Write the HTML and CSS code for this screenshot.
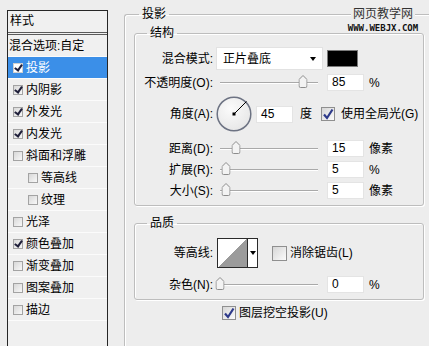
FILE: index.html
```html
<!DOCTYPE html>
<html lang="zh-CN">
  <head>
    <meta charset="UTF-8" />
    <meta name="viewport" content="width=device-width, initial-scale=1.0" />
    <title>图层样式 - 投影</title>
    <link rel="stylesheet" href="styles.css">
  </head>
  <body>
    <div class="dialog">
      <!-- Style list -->
      <aside class="styles-panel">
        <div class="panel-title">样式</div>
        <ul class="style-list">
          <li class="style-item plain">混合选项:自定</li>
          <li class="style-item selected"><span class="tick on"></span>投影</li>
          <li class="style-item"><span class="tick on"></span>内阴影</li>
          <li class="style-item"><span class="tick on"></span>外发光</li>
          <li class="style-item"><span class="tick on"></span>内发光</li>
          <li class="style-item"><span class="tick"></span>斜面和浮雕</li>
          <li class="style-item sub"><span class="tick"></span>等高线</li>
          <li class="style-item sub"><span class="tick"></span>纹理</li>
          <li class="style-item"><span class="tick"></span>光泽</li>
          <li class="style-item"><span class="tick on"></span>颜色叠加</li>
          <li class="style-item"><span class="tick"></span>渐变叠加</li>
          <li class="style-item"><span class="tick"></span>图案叠加</li>
          <li class="style-item"><span class="tick"></span>描边</li>
        </ul>
      </aside>

      <!-- Drop shadow settings -->
      <main class="settings">
        <fieldset class="group outer">
          <legend>投影</legend>

          <fieldset class="group inner">
            <legend>结构</legend>

            <div class="row mode-row">
              <span class="field-label">混合模式:</span>
              <div class="select">正片叠底<span class="caret"></span></div>
              <span class="swatch"></span>
            </div>

            <div class="row slider-row opacity-row">
              <span class="field-label">不透明度(O):</span>
              <div class="slider"><div class="track"><span class="thumb" style="left: 85%"><svg width="9" height="13" viewBox="0 0 9 13"><path d="M0.5 4.5 L4.5 0.5 L8.5 4.5 V11 Q8.5 12.5 7 12.5 H2 Q0.5 12.5 0.5 11 Z" fill="#f3f3f3" stroke="#8c8c8c"/></svg></span></div></div>
              <span class="num">85</span>
              <span class="unit">%</span>
            </div>

            <div class="row angle-row">
              <span class="field-label">角度(A):</span>
              <svg class="dial" width="36" height="36" viewBox="0 0 36 36">
                <defs>
                  <radialGradient id="dialFill" cx="40%" cy="35%" r="70%">
                    <stop offset="0" stop-color="#fbfbfb"/>
                    <stop offset="1" stop-color="#e6e6e6"/>
                  </radialGradient>
                </defs>
                <circle cx="18" cy="18" r="16.8" fill="url(#dialFill)" stroke="#6d7383" stroke-width="1.5"/>
                <line x1="18" y1="18" x2="30.5" y2="5.5" stroke="#000" stroke-width="1"/>
                <rect x="16.5" y="16.5" width="3" height="3" fill="#000"/>
              </svg>
              <span class="num">45</span>
              <span class="deg">度</span>
              <span class="check on"><svg width="12" height="12" viewBox="0 0 12 12"><path d="M2 6.5 L5 10 L10.5 1.5" fill="none" stroke="#2e3a8a" stroke-width="2.2"/></svg></span>
              <span class="check-label">使用全局光(G)</span>
            </div>

            <div class="row slider-row distance-row">
              <span class="field-label">距离(D):</span>
              <div class="slider"><div class="track"><span class="thumb" style="left: 16%"><svg width="9" height="13" viewBox="0 0 9 13"><path d="M0.5 4.5 L4.5 0.5 L8.5 4.5 V11 Q8.5 12.5 7 12.5 H2 Q0.5 12.5 0.5 11 Z" fill="#f3f3f3" stroke="#8c8c8c"/></svg></span></div></div>
              <span class="num">15</span>
              <span class="unit">像素</span>
            </div>

            <div class="row slider-row">
              <span class="field-label">扩展(R):</span>
              <div class="slider"><div class="track"><span class="thumb" style="left: 6%"><svg width="9" height="13" viewBox="0 0 9 13"><path d="M0.5 4.5 L4.5 0.5 L8.5 4.5 V11 Q8.5 12.5 7 12.5 H2 Q0.5 12.5 0.5 11 Z" fill="#f3f3f3" stroke="#8c8c8c"/></svg></span></div></div>
              <span class="num">5</span>
              <span class="unit">%</span>
            </div>

            <div class="row slider-row">
              <span class="field-label">大小(S):</span>
              <div class="slider"><div class="track"><span class="thumb" style="left: 6%"><svg width="9" height="13" viewBox="0 0 9 13"><path d="M0.5 4.5 L4.5 0.5 L8.5 4.5 V11 Q8.5 12.5 7 12.5 H2 Q0.5 12.5 0.5 11 Z" fill="#f3f3f3" stroke="#8c8c8c"/></svg></span></div></div>
              <span class="num">5</span>
              <span class="unit">像素</span>
            </div>
          </fieldset>

          <fieldset class="group inner quality">
            <legend>品质</legend>

            <div class="row contour-row">
              <span class="field-label">等高线:</span>
              <div class="contour">
                <span class="contour-preview"></span>
                <span class="contour-arrow"><span class="caret"></span></span>
              </div>
              <span class="check big"></span>
              <span class="check-label">消除锯齿(L)</span>
            </div>

            <div class="row slider-row noise-row">
              <span class="field-label">杂色(N):</span>
              <div class="slider"><div class="track"><span class="thumb" style="left: 0%"><svg width="9" height="13" viewBox="0 0 9 13"><path d="M0.5 4.5 L4.5 0.5 L8.5 4.5 V11 Q8.5 12.5 7 12.5 H2 Q0.5 12.5 0.5 11 Z" fill="#f3f3f3" stroke="#8c8c8c"/></svg></span></div></div>
              <span class="num">0</span>
              <span class="unit">%</span>
            </div>
          </fieldset>

          <div class="row knockout-row">
            <span class="check on"><svg width="12" height="12" viewBox="0 0 12 12"><path d="M2 6.5 L5 10 L10.5 1.5" fill="none" stroke="#2e3a8a" stroke-width="2.2"/></svg></span>
            <span class="check-label">图层挖空投影(U)</span>
          </div>
        </fieldset>
      </main>

      <div class="watermark">
        <span class="wm-title">网页教学网</span>
        <span class="wm-url">WWW.WEBJX.COM</span>
      </div>
    </div>
  </body>
</html>
```

FILE: styles.css
```css
/* Global */
body {
  margin: 0;
  background: #ededed;
  font-family: "Liberation Sans", "Noto Sans CJK SC", sans-serif;
  font-size: 12px;
  line-height: 14px;
  color: #000;
  overflow: hidden;
}

.dialog {
  position: relative;
  display: flex;
  align-items: flex-start;
  height: 346px;
  overflow: hidden;
}

/* Style list */
.styles-panel {
  flex: none;
  width: 99px;
  height: 336px;
  margin: 10px 0 0 7px;
  border: 1px solid #262626;
  border-bottom: none;
  background: #f0f0f0;
}

.panel-title {
  height: 21px;
  line-height: 21px;
  padding-left: 2px;
  border-bottom: 3px double #5a5a5a;
}

.style-list {
  list-style: none;
  margin: 0;
  padding: 0;
}

.style-item {
  display: flex;
  align-items: center;
  height: 21px;
  padding-left: 5px;
  border-bottom: 1px solid #fbfbfb;
  white-space: nowrap;
}

.style-item.plain {
  padding-left: 1px;
}

.style-item.sub {
  padding-left: 20px;
}

.style-item.selected {
  background: #3b8fe8;
  color: #fff;
}

.tick {
  position: relative;
  flex: none;
  width: 8px;
  height: 8px;
  margin-right: 3px;
  border: 1px solid #a3a3a3;
  background: linear-gradient(135deg, #d8d8d8, #f8f8f8);
}

.selected .tick {
  background: #fff;
  border-color: #d0d0d0;
}

.tick.on::after {
  content: "";
  position: absolute;
  left: 2px;
  top: -1px;
  width: 3px;
  height: 6px;
  border: solid #1f1f3a;
  border-width: 0 2px 2px 0;
  transform: rotate(35deg);
}

/* Settings groups */
.settings {
  margin: 7px 0 0 16px;
}

.group {
  margin: 0;
  padding: 0;
  min-width: 0;
  border: 1px solid #bdbdbd;
  border-radius: 3px;
  box-shadow: inset 1px 1px 0 #fff, 1px 1px 0 #fff;
}

.group > legend {
  height: 14px;
  padding: 0 3px;
  line-height: 14px;
}

.outer {
  box-sizing: border-box;
  width: 305px;
  height: 339px;
  border-right: none;
  border-bottom: none;
  border-radius: 3px 0 0 0;
  box-shadow: inset 1px 1px 0 #fff;
}

.outer > legend {
  margin-left: 14px;
}

.inner {
  width: 288px;
  margin: 5px 0 0 9px;
  padding: 7px 0 4px;
}

.inner > legend {
  margin-left: 12px;
}

.quality {
  margin-top: 10px;
  padding: 8px 0 4px;
}

/* Rows */
.row {
  display: flex;
  align-items: center;
  white-space: nowrap;
}

.field-label {
  flex: none;
  width: 78px;
  text-align: right;
}

.mode-row {
  height: 23px;
}

.slider-row {
  height: 21px;
}

.opacity-row {
  margin-top: 2px;
}

.angle-row {
  height: 36px;
  margin-top: 3px;
}

.distance-row {
  margin-top: 6px;
}

.contour-row {
  height: 30px;
}

.noise-row {
  margin-top: 6px;
}

.knockout-row {
  height: 14px;
  margin: 6px 0 0 97px;
}

/* Controls */
.select {
  display: flex;
  align-items: center;
  box-sizing: border-box;
  width: 107px;
  height: 23px;
  margin-left: 3px;
  padding-left: 6px;
  background: #fff;
  border: 1px solid #e2e2e2;
}

.caret {
  width: 0;
  height: 0;
  border-left: 3px solid transparent;
  border-right: 3px solid transparent;
  border-top: 4px solid #000;
}

.select .caret {
  margin: 0 6px 0 auto;
}

.swatch {
  box-sizing: border-box;
  width: 31px;
  height: 17px;
  margin-left: 4px;
  background: #000;
  border: 1px solid #7a7a7a;
}

.slider {
  display: flex;
  align-items: center;
  box-sizing: border-box;
  width: 107px;
  height: 21px;
  margin-left: 3px;
  padding: 0 5px 0 4px;
}

.track {
  position: relative;
  flex: 1;
  height: 0;
  border-top: 1px solid #a9a9a9;
  border-bottom: 1px solid #fff;
}

.thumb {
  position: absolute;
  top: -8px;
  width: 9px;
  height: 13px;
  transform: translateX(-50%);
}

.thumb svg {
  display: block;
}

.num {
  box-sizing: border-box;
  width: 37px;
  height: 17px;
  margin-left: 4px;
  padding-left: 4px;
  line-height: 15px;
  background: #fff;
  border: 1px solid #e4e4e4;
}

.unit {
  margin-left: 5px;
}

.dial {
  margin-left: 3px;
}

.deg {
  margin-left: 7px;
}

.check {
  display: flex;
  align-items: center;
  justify-content: center;
  box-sizing: border-box;
  flex: none;
  width: 14px;
  height: 14px;
  border: 1px solid #8f8f8f;
  background: linear-gradient(135deg, #d6d6d6, #fbfbfb);
}

.angle-row .check {
  margin-left: 9px;
}

.check.big {
  width: 15px;
  height: 15px;
  margin-left: 14px;
}

.check-label {
  margin-left: 3px;
}

.angle-row .check-label {
  margin-left: 6px;
}

.contour {
  display: flex;
  box-sizing: border-box;
  width: 41px;
  height: 30px;
  margin-left: 4px;
  border: 1px solid #2a2a2a;
  background: #fff;
}

.contour-preview {
  width: 29px;
  background: linear-gradient(to top left, #9b9b9b 50%, #fff 50%);
}

.contour-arrow {
  display: flex;
  align-items: center;
  justify-content: center;
  flex: 1;
  border-left: 1px solid #2a2a2a;
}

/* Watermark */
.watermark {
  position: absolute;
  left: 346px;
  top: 7px;
  display: flex;
  flex-direction: column;
  align-items: center;
  width: 74px;
}

.wm-title {
  padding: 0 2px;
  background: #ededed;
  color: #333;
  font-size: 12px;
  line-height: 14px;
}

.wm-url {
  margin-top: 3px;
  font-family: "DejaVu Sans Mono", monospace;
  font-size: 9px;
  font-weight: bold;
  line-height: 9px;
  color: #111;
}
```
